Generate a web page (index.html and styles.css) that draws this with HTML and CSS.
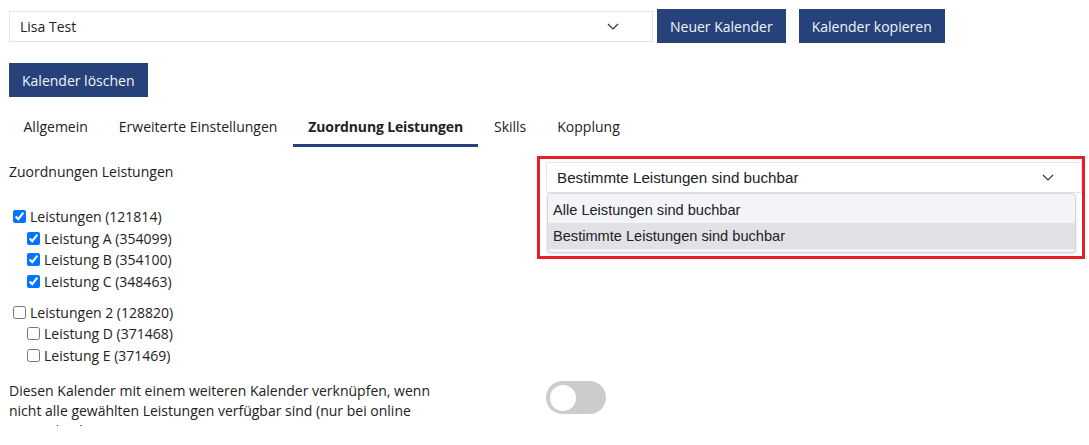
FILE: index.html
```html
<!DOCTYPE html>
<html lang="de">
<head>
    <meta charset="UTF-8">
    <meta name="viewport" content="width=device-width, initial-scale=1.0">
    <title>Kalender</title>
    <link rel="stylesheet" href="styles.css">
</head>
<body>
    <div class="page">
        <!-- Kalenderauswahl + Aktionen -->
        <div class="top-row">
            <div class="select calendar-select">
                <span>Lisa Test</span>
                <svg class="chevron" width="12" height="7" viewBox="0 0 12 7"><polyline points="1,1 6,6 11,1" /></svg>
            </div>
            <button class="btn">Neuer Kalender</button>
            <button class="btn">Kalender kopieren</button>
        </div>
        <div class="second-row">
            <button class="btn">Kalender löschen</button>
        </div>

        <ul class="tabs">
            <li class="tab">Allgemein</li>
            <li class="tab">Erweiterte Einstellungen</li>
            <li class="tab active">Zuordnung Leistungen</li>
            <li class="tab">Skills</li>
            <li class="tab">Kopplung</li>
        </ul>

        <div class="assign">
            <div class="assign-left">
                <div class="field-label">Zuordnungen Leistungen</div>
                <div class="tree">
                    <div class="group">
                        <label class="tree-row"><input type="checkbox" checked> Leistungen (121814)</label>
                        <label class="tree-row child"><input type="checkbox" checked> Leistung A (354099)</label>
                        <label class="tree-row child"><input type="checkbox" checked> Leistung B (354100)</label>
                        <label class="tree-row child"><input type="checkbox" checked> Leistung C (348463)</label>
                    </div>
                    <div class="group">
                        <label class="tree-row"><input type="checkbox"> Leistungen 2 (128820)</label>
                        <label class="tree-row child"><input type="checkbox"> Leistung D (371468)</label>
                        <label class="tree-row child"><input type="checkbox"> Leistung E (371469)</label>
                    </div>
                </div>
            </div>
            <div class="assign-right">
                <div class="mode-field">
                    <div class="select mode-select">
                        <span>Bestimmte Leistungen sind buchbar</span>
                        <svg class="chevron" width="12" height="7" viewBox="0 0 12 7"><polyline points="1,1 6,6 11,1" /></svg>
                    </div>
                    <ul class="options">
                        <li class="option">Alle Leistungen sind buchbar</li>
                        <li class="option selected">Bestimmte Leistungen sind buchbar</li>
                    </ul>
                    <div class="highlight"></div>
                </div>
            </div>
        </div>

        <div class="link-row">
            <p class="link-text">Diesen Kalender mit einem weiteren Kalender verknüpfen, wenn nicht alle gewählten Leistungen verfügbar sind (nur bei online Terminbuchungen)</p>
            <div>
                <div class="toggle"><span class="knob"></span></div>
            </div>
        </div>
    </div>
</body>
</html>
```

FILE: styles.css
```css
* {
    padding: 0;
    margin: 0;
    box-sizing: border-box;
}

body {
    font-family: "Open Sans", sans-serif;
    font-size: 14px;
    color: #222;
    background: #fff;
}

.page {
    height: 426px;
    overflow: hidden;
    padding: 9px 7px 0 9px;
}

/* obere Zeile */
.top-row {
    display: flex;
    align-items: center;
}

.select {
    display: flex;
    align-items: center;
    justify-content: space-between;
    border: 1px solid #e4e4e4;
    background: #fff;
}

.calendar-select {
    width: 644px;
    height: 31px;
    padding: 0 33px 0 10px;
    margin-right: 4px;
}

.chevron {
    fill: none;
    stroke: #333;
    stroke-width: 1.2;
}

.btn {
    height: 34px;
    padding: 0 13px;
    border: none;
    background-color: #27427a;
    color: #f2f4f8;
    font-family: "Open Sans", sans-serif;
    font-size: 14px;
    margin-right: 13px;
}

.second-row {
    margin-top: 20px;
}

/* Reiter */
.tabs {
    list-style: none;
    display: flex;
    margin: 10px 0 0 -1px;
}

.tab {
    padding: 10px 15.5px 7px;
    line-height: 20px;
    border-bottom: 3px solid transparent;
}

.tab.active {
    font-weight: 700;
    letter-spacing: -0.15px;
    border-bottom-color: #27427a;
}

/* Zuordnung */
.assign {
    display: grid;
    grid-template-columns: 537px 1fr;
    margin-top: 15px;
}

.field-label {
    line-height: 20px;
}

.tree {
    margin-top: 24px;
}

.group + .group {
    margin-top: 9.5px;
}

.tree-row {
    display: flex;
    align-items: center;
    height: 21.5px;
}

.tree-row input {
    margin: 0 4px 0 4px;
    width: 13px;
    height: 13px;
}

.tree-row.child {
    padding-left: 14px;
}

.mode-field {
    position: relative;
}

.mode-select {
    height: 31px;
    padding: 0 27px 0 10px;
    font-family: "Liberation Sans", Arial, sans-serif;
    font-size: 15.2px;
}

.options {
    list-style: none;
    position: absolute;
    top: 31px;
    left: 1px;
    width: 529px;
    padding: 3px 0;
    border: 1px solid #d6d6d9;
    border-radius: 4px;
    overflow: hidden;
    box-shadow: 0 1px 3px rgba(0, 0, 0, 0.12);
    background: #f3f4f8;
    font-family: "Liberation Sans", Arial, sans-serif;
    font-size: 14.6px;
}

.option {
    height: 26px;
    line-height: 26px;
    padding: 0 5px;
}

.option.selected {
    background: #e1e1e6;
}

.highlight {
    position: absolute;
    top: -6px;
    left: -9px;
    right: -3px;
    height: 103px;
    border: 3px solid #e61e27;
    pointer-events: none;
}

/* Kopplung */
.link-row {
    display: grid;
    grid-template-columns: 537px 1fr;
    margin-top: 15px;
}

.link-text {
    max-width: 445px;
    line-height: 20px;
}

.toggle {
    position: relative;
    width: 60px;
    height: 33px;
    border-radius: 17px;
    background: #ccc;
}

.knob {
    position: absolute;
    top: 3.5px;
    left: 4px;
    width: 26px;
    height: 26px;
    border-radius: 50%;
    background: #fff;
}
```
